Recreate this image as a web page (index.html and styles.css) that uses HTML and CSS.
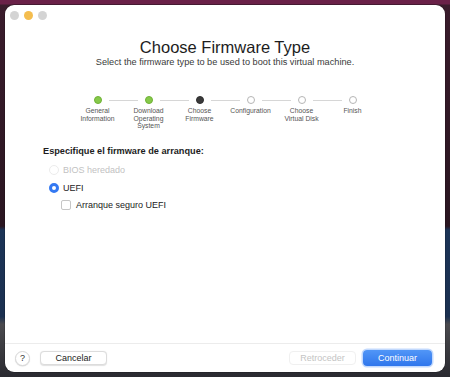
FILE: index.html
```html
<!DOCTYPE html>
<html lang="es">
<head>
    <meta charset="UTF-8">
    <meta name="viewport" content="width=device-width, initial-scale=1.0">
    <title>Choose Firmware Type</title>
    <link rel="stylesheet" href="styles.css">
</head>
<body>
    <div class="window">
        <div class="titlebar">
            <span class="light gray"></span>
            <span class="light yellow"></span>
            <span class="light gray"></span>
        </div>

        <div class="header">
            <h1>Choose Firmware Type</h1>
            <p class="subtitle">Select the firmware type to be used to boot this virtual machine.</p>
        </div>

        <div class="stepper">
            <div class="step done first">
                <div class="track"><span class="line"></span><span class="dot"></span><span class="line"></span></div>
                <div class="label">General<br>Information</div>
            </div>
            <div class="step done">
                <div class="track"><span class="line"></span><span class="dot"></span><span class="line"></span></div>
                <div class="label">Download<br>Operating<br>System</div>
            </div>
            <div class="step current">
                <div class="track"><span class="line"></span><span class="dot"></span><span class="line"></span></div>
                <div class="label">Choose<br>Firmware</div>
            </div>
            <div class="step">
                <div class="track"><span class="line"></span><span class="dot"></span><span class="line"></span></div>
                <div class="label">Configuration</div>
            </div>
            <div class="step">
                <div class="track"><span class="line"></span><span class="dot"></span><span class="line"></span></div>
                <div class="label">Choose<br>Virtual Disk</div>
            </div>
            <div class="step last">
                <div class="track"><span class="line"></span><span class="dot"></span><span class="line"></span></div>
                <div class="label">Finish</div>
            </div>
        </div>

        <div class="content">
            <h2>Especifique el firmware de arranque:</h2>
            <div class="option disabled">
                <span class="radio"></span>
                <span>BIOS heredado</span>
            </div>
            <div class="option">
                <span class="radio checked"></span>
                <span>UEFI</span>
            </div>
            <div class="option sub">
                <span class="checkbox"></span>
                <span>Arranque seguro UEFI</span>
            </div>
        </div>

        <div class="footer">
            <button class="help">?</button>
            <button class="btn">Cancelar</button>
            <div class="spacer"></div>
            <button class="btn" disabled>Retroceder</button>
            <button class="btn primary">Continuar</button>
        </div>
    </div>
</body>
</html>
```

FILE: styles.css
```css
html, body {
    margin: 0;
    padding: 0;
}

body {
    width: 450px;
    height: 377px;
    padding: 5px;
    box-sizing: border-box;
    font-family: "Liberation Sans", Arial, sans-serif;
    background: linear-gradient(to bottom, #6a2148 0, #6a2148 4px, #3a1c2c 5px, #2a1621 60%, #1c3457 61%, #1b3050 84%, #4a4a4e 86%, #2a2a30 100%);
    overflow: hidden;
}

.window {
    width: 440px;
    height: 367px;
    background-color: #fff;
    border-radius: 9px;
    display: flex;
    flex-direction: column;
    box-shadow: 0 0 0 0.5px rgba(0,0,0,0.3);
}

.titlebar {
    height: 20px;
    padding-left: 5px;
    display: flex;
    align-items: center;
    gap: 5px;
}

.light {
    width: 9px;
    height: 9px;
    border-radius: 50%;
}

.light.gray {
    background-color: #d4d4d4;
}

.light.yellow {
    background-color: #f4bd4f;
}

.header {
    text-align: center;
}

h1 {
    margin: 12px 0 0;
    font-size: 16.5px;
    line-height: 20px;
    font-weight: normal;
    color: #1d1d1d;
}

.subtitle {
    margin: 0;
    font-size: 9.2px;
    line-height: 11px;
    color: #3a3a3a;
}

.stepper {
    margin-top: 28px;
    display: flex;
    justify-content: center;
}

.step {
    width: 51px;
}

.track {
    height: 8px;
    display: flex;
    align-items: center;
}

.line {
    flex: 1;
    height: 1px;
    background-color: #d6d6d6;
}

.line:first-child {
    margin-right: 7px;
}

.line:last-child {
    margin-left: 7px;
}

.step.first .line:first-child,
.step.last .line:last-child {
    visibility: hidden;
}

.dot {
    width: 8px;
    height: 8px;
    box-sizing: border-box;
    border-radius: 50%;
    border: 1px solid #b5b5b5;
    background-color: #fff;
}

.step.done .dot {
    background-color: #86c94a;
    border-color: #6fb236;
}

.step.current .dot {
    background-color: #3a3a3a;
    border-color: #2e2e2e;
}

.label {
    margin-top: 3px;
    text-align: center;
    font-size: 6.8px;
    line-height: 7.7px;
    color: #555;
}

.content {
    margin-top: 16px;
    padding-left: 38px;
}

h2 {
    margin: 0 0 4px;
    font-size: 9.2px;
    line-height: 11px;
    font-weight: bold;
    color: #1d1d1d;
}

.option {
    height: 17.6px;
    display: flex;
    align-items: center;
    gap: 4px;
    padding-left: 6px;
    font-size: 9px;
    color: #222;
}

.option.disabled {
    color: #c2c2c2;
}

.option.sub {
    padding-left: 18px;
    gap: 5px;
}

.radio {
    width: 10px;
    height: 10px;
    box-sizing: border-box;
    border-radius: 50%;
    border: 1px solid #c9c9c9;
    background-color: #fff;
}

.option.disabled .radio {
    border-color: #ececec;
}

.radio.checked {
    border: 3px solid #3479f2;
    background-color: #fff;
}

.checkbox {
    width: 10px;
    height: 10px;
    box-sizing: border-box;
    border-radius: 2px;
    border: 1px solid #c6c6c6;
    background-color: #fff;
}

.footer {
    margin-top: auto;
    height: 29px;
    box-sizing: border-box;
    border-top: 1px solid #ececec;
    padding: 0 13px 0 10px;
    display: flex;
    align-items: center;
    gap: 7px;
}

.spacer {
    flex: 1;
}

button {
    font-family: "Liberation Sans", Arial, sans-serif;
    cursor: pointer;
}

.help {
    width: 15px;
    height: 15px;
    padding: 0;
    margin-right: 3px;
    border-radius: 50%;
    border: 0.5px solid #d8d8d8;
    background-color: #fff;
    box-shadow: 0 0.5px 1px rgba(0,0,0,0.15);
    font-size: 9px;
    color: #333;
}

.btn {
    width: 67px;
    height: 14px;
    padding: 0;
    border-radius: 4px;
    border: 0.5px solid #dcdcdc;
    background-color: #fff;
    box-shadow: 0 0.5px 1px rgba(0,0,0,0.12);
    font-size: 9px;
    color: #222;
}

.btn:disabled {
    color: #c4c4c4;
    border-color: #f0f0f0;
    box-shadow: none;
    cursor: default;
}

.btn.primary {
    width: 69px;
    height: 16px;
    border: none;
    color: #fff;
    background: linear-gradient(to bottom, #5196f7, #2f76ec);
    box-shadow: 0 0 0 1.5px rgba(120,170,250,0.45);
}
```
